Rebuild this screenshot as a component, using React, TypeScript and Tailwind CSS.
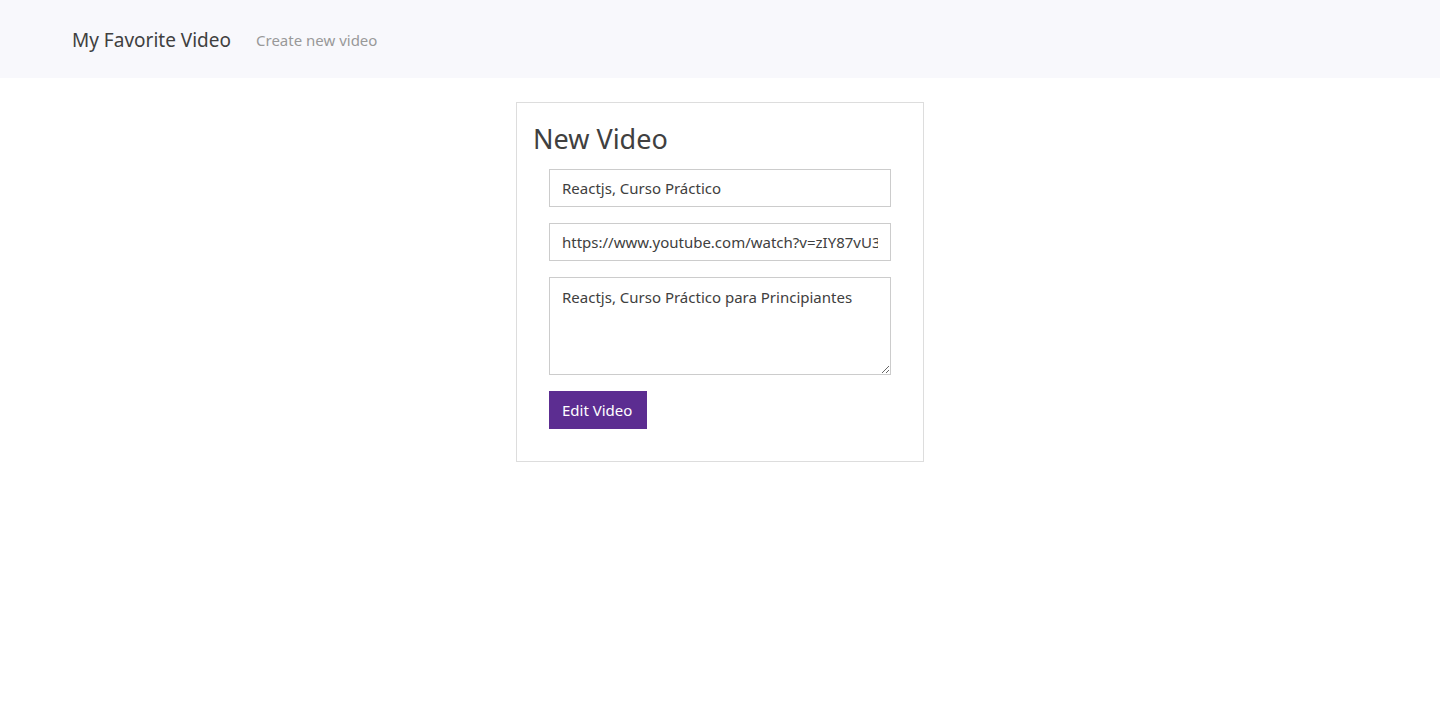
export default function App(): JSX.Element {
  return (
    <div className="min-h-screen bg-white text-[#404040] font-['Noto_Sans','Open_Sans',sans-serif]">
      <nav className="h-[78px] bg-[#f8f8fc] flex items-center px-[72px] pt-[2px]">
        <span className="text-[19px] text-[#404040] mr-[25px]">My Favorite Video</span>
        <span className="text-[15px] text-[#999]">Create new video</span>
      </nav>
      <div className="flex justify-center pt-6">
        <div className="w-[408px] h-[360px] border border-[#ddd] px-4 pt-[17px]">
          <h1 className="text-[27px] leading-[38px] text-[#404040]">New Video</h1>
          <form className="px-4 pt-[11px] flex flex-col gap-4">
            <input
              className="h-[38px] w-full border border-[#ccc] px-3 text-[15px] text-[#404040] outline-none"
              defaultValue="Reactjs, Curso Práctico"
            />
            <input
              className="h-[38px] w-full border border-[#ccc] px-3 text-[15px] text-[#404040] outline-none"
              defaultValue="https://www.youtube.com/watch?v=zIY87vU33aA"
            />
            <textarea
              className="h-[98px] w-full border border-[#ccc] px-3 py-[8px] text-[15px] text-[#404040] outline-none"
              defaultValue="Reactjs, Curso Práctico para Principiantes"
            />
            <div>
              <button type="button" className="h-[38px] pl-[13px] pr-[15px] bg-[#5c2d91] text-white text-[15px]">
                Edit Video
              </button>
            </div>
          </form>
        </div>
      </div>
    </div>
  )
}
